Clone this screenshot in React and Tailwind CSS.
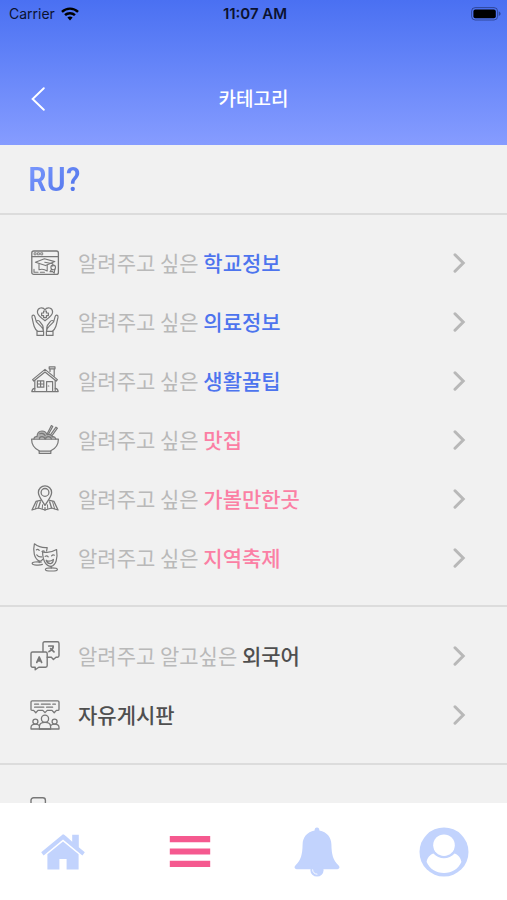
import React from 'react';

const line = {
  fill: 'none',
  stroke: 'currentColor',
  strokeLinecap: 'round',
  strokeLinejoin: 'round',
};

function SchoolIcon() {
  return (
    <svg viewBox="0 0 30 30" className="h-[30px] w-[30px]" {...line} strokeWidth="1.1">
      <rect x="1.8" y="3" width="26.6" height="23.4" rx="2" strokeWidth="1.3" />
      <path d="M1.8 8.6h26.6" />
      <path d="M4.5 4.8h1.6v2H4.5zM7.8 4.8h1.6v2H7.8zM11.1 4.8h1.6v2h-1.6z" strokeWidth="0.9" />
      <path d="M5.4 14.2l9-3.4 10.4 2.8-9.2 4z" />
      <path d="M9 16.4v5.4c2.6-1 5.8-.4 8.2 1.2v-5.6M14.8 14.2l8 1.6v2.4" />
      <circle cx="23.2" cy="19.4" r="2.3" />
      <path d="M21.6 21.2l-1.6 2.6 2.4-.4 1.8 1.8.6-3.8M4 21.4v2.8h4M10.4 24.2h4" />
    </svg>
  );
}

function CareIcon() {
  return (
    <svg viewBox="0 0 30 30" className="h-[30px] w-[30px]" {...line} strokeWidth="1.2">
      <path d="M15 13.8C11.4 11.2 7.4 8.4 7.4 5c0-4.6 5.6-5.4 7.6-2.2C17-.4 22.6.4 22.6 5c0 3.4-4 6.2-7.6 8.8z" />
      <path d="M13.6 4h2.8v2h2v2.6h-2v2h-2.8v-2h-2V6h2z" />
      <path d="M7.6 24.2C4.4 22 3.6 18.4 2 10.2c-.4-2.4 2.2-2.8 2.8-.8l1.6 5.4 4.8 4.8c1.8 1.6 2.2 3 2.2 4.6M6.4 14.8c.4-2 2.6-1.4 3.4-.2l2.8 3.8c.8 1.4.8 3.4.8 5.8" />
      <path d="M22.4 24.2c3.2-2.2 4-5.8 5.6-14 .4-2.4-2.2-2.8-2.8-.8l-1.6 5.4-4.8 4.8c-1.8 1.6-2.2 3-2.2 4.6M23.6 14.8c-.4-2-2.6-1.4-3.4-.2l-2.8 3.8c-.8 1.4-.8 3.4-.8 5.8" />
      <path d="M7 24.4h6.6v4H7zM16.4 24.4H23v4h-6.6z" />
    </svg>
  );
}

function HouseIcon() {
  return (
    <svg viewBox="0 0 30 30" className="h-[30px] w-[30px]" {...line} strokeWidth="1.2">
      <path d="M2.6 13.6L15 3.4l12.4 10.2-1.2 1.4L15 6 3.8 15z" />
      <path d="M4.8 14.4v10.2M25.2 14.4v10.2M20 5.4V2.8h4.2v7.4M19.2.8h5.8v2h-5.8z" />
      <path d="M7.4 14.8h6.4v6.4H7.4zM10.6 14.8v6.4M7.4 18h6.4M16.6 24.6v-9h6v9" />
      <path d="M18.2 20h.6" />
      <path d="M4.8 22.4c-2 .2-2.8 1.6-3 3.2h26.4c-.2-1.6-1-3-3-3.2" />
    </svg>
  );
}

function BowlIcon() {
  return (
    <svg viewBox="0 0 30 30" className="h-[30px] w-[30px]" {...line} strokeWidth="1.2">
      <path d="M1.6 14.2h26.8c0 6-3.4 9.6-7.6 11.6v2.6H9.2v-2.6C5 23.8 1.6 20.2 1.6 14.2z" />
      <path d="M9.2 26.2h11.6" />
      <path d="M4 14c0-1.6 1.4-2.8 3-2.4.2-3.6 2.2-5.6 5-5.6 2.4 0 4.2 1.2 5 3.6 2.6-.8 4.6.2 5.4 2.2 1.8-.4 3 .8 3.4 2.2" fill="#b0b0b0" />
      <path d="M9.4 14c0-3 4.8-3.4 5.6 0M15.6 14c.4-3 5-3.2 5.8 0M9.8 8.8c2.2-1.2 4.6 0 5.4 2" />
      <path d="M17.2 8.8L21.4.6l1.4.8L18.6 9M20.6 9.6l5.4-7.4 1.4 1-5.4 7.4" />
    </svg>
  );
}

function PinIcon() {
  return (
    <svg viewBox="0 0 30 30" className="h-[30px] w-[30px]" {...line} strokeWidth="1.3">
      <path d="M15 21.4c-2.6-4.8-6.6-8.8-6.6-13a6.6 6.6 0 0 1 13.2 0c0 4.2-4 8.2-6.6 13z" />
      <circle cx="15" cy="8.4" r="3.9" />
      <path d="M10.4 16.4L6 17.4 2 26l6.4-2 6.6 2 6.6-2 6.4 2-4-8.6-4.4-1" />
      <path d="M8.4 24l2-6.2M21.6 24l-2-6.2M15 26v-2.4" />
      <path d="M5.4 24.8l2-7M24.6 24.8l-2-7M12.2 24.8l.4-4M17.8 24.8l-.4-4" strokeWidth="1" />
    </svg>
  );
}

function MasksIcon() {
  return (
    <svg viewBox="0 0 30 30" className="h-[30px] w-[30px]" {...line} strokeWidth="1.2">
      <path d="M12.6 16.4c-1 1.6-2 2.2-3.4 1.6C4.4 15.8 2.6 8.4 4.4.8c3.6 2.8 8.4 4.2 12.8 3.8l-.6 3.4" />
      <path d="M6.4 6.8c1-.8 2-.6 2.8.6M12 8.6c.6-.8 1.6-.8 2.4-.4M6.8 11.8c1.2 1.6 3 2.4 4.8 2" />
      <path d="M9.2 18.2v1.4" />
      <path d="M12.4 21.4c-2.4 1.2-9.8 1-10.2-.8-.4-1.6 4.8-2.2 9-1.4" />
      <path d="M12.6 8.8c4.6 1.2 9.6.4 14-2.2 1.4 9.2-.8 15.6-5.4 16.8-4.8.2-8.6-5.4-8.6-14.6z" />
      <path d="M15.2 13.4c1-.8 2.2-.6 3 .4M21.6 12.8c.8-1 2-1.2 2.8-.6M16.2 17.2c2.2 1.4 5 1 7.2-.8-.2 2.6-1.2 4-2.8 4.2-2 .2-3.6-1-4.4-3.4z" />
      <path d="M21.2 23.4v1.8" />
      <ellipse cx="21.4" cy="26.4" rx="6" ry="1.6" />
    </svg>
  );
}

function TranslateIcon() {
  return (
    <svg viewBox="0 0 30 30" className="h-[30px] w-[30px]" {...line} strokeWidth="1.4">
      <path d="M13 10.6V2.4c0-1 .6-1.6 1.6-1.6h12.8c1 0 1.6.6 1.6 1.6v12.2c0 1-.6 1.6-1.6 1.6H26l-2.6 2.4-2-2.4h-4.2" />
      <path d="M17.2 18.6v6c0 1-.6 1.6-1.6 1.6H8.8l-3.6 2.6v-2.6H2.6c-1 0-1.6-.6-1.6-1.6V12.6c0-1 .6-1.6 1.6-1.6h13c1 0 1.6.6 1.6 1.6z" />
      <path d="M6.8 21.4L9.2 16l2.4 5.4M7.6 19.8h3.2M18.8 5h4.4c.2 2.4-1.8 4.4-4.2 5.6M20.6 7.6l3.4 3.2" strokeWidth="1.7" />
    </svg>
  );
}

function BoardIcon() {
  return (
    <svg viewBox="0 0 30 30" className="h-[30px] w-[30px]" {...line} strokeWidth="1.3">
      <path d="M2.2.8h25.6c.8 0 1.2.4 1.2 1.2v7.2c0 .8-.4 1.2-1.2 1.2h-1.4l-2.2 2.4-2.2-2.4h-4.8L15 12.6l-2.2-2.2H8l-2.2 2.4-2.2-2.4H2.2c-.8 0-1.2-.4-1.2-1.2V2C1 1.2 1.4.8 2.2.8z" />
      <path d="M4.6 4.2h4M11.4 4.2h8.8M22.8 4.2h2.6M4.6 7.2h9.2M16.6 7.2h6" />
      <circle cx="15" cy="18.8" r="3.6" />
      <path d="M9.4 29v-2.6c0-2.6 2-4 5.6-4s5.6 1.4 5.6 4V29z" />
      <circle cx="5.4" cy="21.6" r="2.5" />
      <circle cx="24.6" cy="21.6" r="2.5" />
      <path d="M9.4 25.6C8.4 24.6 7.2 24.2 5.4 24.2 2.6 24.2 1 25.4 1 27.4V29h28v-1.6c0-2-1.6-3.2-4.4-3.2-1.8 0-3 .4-4 1.4" />
    </svg>
  );
}

function PhoneIcon() {
  return (
    <svg viewBox="0 0 30 30" className="h-[30px] w-[30px]" {...line} strokeWidth="1.4">
      <rect x="1" y="0.7" width="14.4" height="28.4" rx="2.6" />
    </svg>
  );
}

function Chevron() {
  return (
    <svg viewBox="0 0 14 20" className="h-5 w-[14px] text-[#b8b8b8]" fill="none" stroke="currentColor" strokeWidth="3">
      <path d="M3 1.8L11.2 10 3 18.2" strokeLinecap="round" />
    </svg>
  );
}

const infoItems = [
  { icon: SchoolIcon, lead: '알려주고 싶은', name: '학교정보', color: 'text-[#4d74ee]' },
  { icon: CareIcon, lead: '알려주고 싶은', name: '의료정보', color: 'text-[#4d74ee]' },
  { icon: HouseIcon, lead: '알려주고 싶은', name: '생활꿀팁', color: 'text-[#4d74ee]' },
  { icon: BowlIcon, lead: '알려주고 싶은', name: '맛집', color: 'text-[#fb7fa4]' },
  { icon: PinIcon, lead: '알려주고 싶은', name: '가볼만한곳', color: 'text-[#fb7fa4]' },
  { icon: MasksIcon, lead: '알려주고 싶은', name: '지역축제', color: 'text-[#fb7fa4]' },
];

const boardItems = [
  { icon: TranslateIcon, lead: '알려주고 알고싶은', name: '외국어', color: 'text-[#4f4f4f]' },
  { icon: BoardIcon, name: '자유게시판', color: 'text-[#4f4f4f]' },
];

function CategoryRow({ item }) {
  const Icon = item.icon;
  return (
    <li>
      <a href="#" className="flex h-[59px] items-center pr-[41px] pl-[30px]">
        <span className="text-[#787878]">
          <Icon />
        </span>
        <span className="ml-[18px] flex-1 pb-[2px] text-[21px] leading-7 whitespace-nowrap text-[#b9b9b9]">
          {item.lead && `${item.lead} `}
          <span className={`font-medium ${item.color}`}>{item.name}</span>
        </span>
        <Chevron />
      </a>
    </li>
  );
}

function StatusBar() {
  return (
    <div className="grid h-7 grid-cols-3 items-center pr-[6px] pl-[9px] font-[Inter,sans-serif] text-[#0b1230]">
      <div className="flex items-center gap-[6px]">
        <span className="text-sm">Carrier</span>
        <svg viewBox="0 0 18 14" className="h-[14px] w-[18px]" fill="#000">
          <path d="M9 .4C5.600.4 2.500 1.700.1 3.900l1.700 1.800a10.400 10.400 0 0 1 14.400 0l1.700-1.800C15.500 1.700 12.400.4 9 .4z" />
          <path d="M9 5c-2.200 0-4.200.8-5.800 2.200l1.700 1.800a6 6 0 0 1 8.200 0l1.700-1.800A8.700 8.700 0 0 0 9 5z" />
          <path d="M9 9.400c-1 0-1.900.4-2.600 1L9 13.400l2.600-3c-.7-.6-1.600-1-2.600-1z" />
        </svg>
      </div>
      <span className="text-center text-[15px] font-semibold">11:07 AM</span>
      <svg viewBox="0 0 30 14" className="h-[14px] w-[30px] justify-self-end">
        <rect x="0.6" y="0.6" width="26" height="12.4" rx="3.6" fill="none" stroke="#0b1230" strokeOpacity="0.45" />
        <rect x="2.4" y="2.4" width="22.4" height="8.8" rx="2" fill="#000" />
        <path d="M27.8 4.6c1.2.4 1.8 1.2 1.8 2.2s-.6 1.8-1.8 2.2z" fill="#0b1230" fillOpacity="0.45" />
      </svg>
    </div>
  );
}

function TabBar() {
  return (
    <nav className="grid h-[97px] shrink-0 grid-cols-4 items-center justify-items-center bg-white text-[#c2d3fd]">
      <a href="#" aria-label="홈">
        <svg viewBox="0 0 44 36" className="h-9 w-11" fill="currentColor">
          <path d="M22 .2L.2 18.2l2.4 3.2L22 5.4l19.4 16 2.4-3.2-6-5V.8h-6.6v6.9L25.4 2.6C23.4.9 22.8.2 22 .2z" />
          <path d="M22 7.4L6.4 20.2V35.6h12V25h7.2v10.6h12V20.2z" />
        </svg>
      </a>
      <a href="#" aria-label="카테고리">
        <svg viewBox="0 0 42 32" className="h-8 w-[42px]" fill="#f5598f">
          <path d="M.8 0h40.4v6.2H.8zM.8 12.4h40.4v6.2H.8zM.8 24.8h40.4V31H.8z" />
        </svg>
      </a>
      <a href="#" aria-label="알림">
        <svg viewBox="0 0 46 50" className="h-[50px] w-[46px]" fill="currentColor">
          <path d="M23 .6c1.600 0 2.400 1.200 2.400 3C33 5 37.200 10.400 37.400 17.400c.2 10 1.600 15.600 7 20.800 1.800 1.800 1.200 4-1.200 4H2.800c-2.400 0-3-2.200-1.200-4 5.400-5.200 6.800-10.800 7-20.800C8.800 10.400 13 5 20.600 3.600c0-1.800.8-3 2.400-3z" />
          <circle cx="23" cy="43" r="6.6" />
          <path d="M18.6 42.8c.2 2.6 1.8 4.2 4.4 4.4" fill="none" stroke="#fff" strokeWidth="0.9" strokeLinecap="round" />
        </svg>
      </a>
      <a href="#" aria-label="내 정보">
        <svg viewBox="0 0 50 50" className="h-[50px] w-[50px]" fill="currentColor">
          <circle cx="25" cy="25" r="24.5" />
          <circle cx="25" cy="18.2" r="10.8" fill="#fff" />
          <path d="M14.4 26.4c5.6 6.4 15.6 6.4 21.2 0 3.6 1.4 6.4 4.6 6.8 8.6C39.6 41.6 33 46 25 46S10.4 41.6 7.6 35c.4-4 3.2-7.2 6.8-8.6z" fill="#fff" />
        </svg>
      </a>
    </nav>
  );
}

export default function App() {
  return (
    <div className="flex h-screen flex-col bg-[#f1f1f1] font-['Noto_Sans_CJK_KR',sans-serif]">
      <header className="shrink-0 bg-linear-to-b from-[#4a70f2] to-[#869cff]">
        <StatusBar />
        <div className="mt-6 grid h-[93px] grid-cols-3 items-center px-[30px] text-white">
          <button type="button" aria-label="뒤로" className="justify-self-start">
            <svg viewBox="0 0 16 24" className="h-6 w-4" fill="none" stroke="currentColor" strokeWidth="1.9" strokeLinecap="round">
              <path d="M13.8 1.2L2.6 12l11.2 10.8" />
            </svg>
          </button>
          <h1 className="pb-[2px] text-center text-[19px] leading-7 font-medium">카테고리</h1>
        </div>
      </header>

      <main className="min-h-0 flex-1 overflow-y-auto [scrollbar-width:none]">
        <div className="flex h-[70px] items-center border-b-2 border-[#dcdcdc] pl-7">
          <span className="bg-linear-to-br from-[#7f9cff] to-[#4a6ee8] bg-clip-text font-['Roboto_Condensed','Open_Sans_Condensed','Noto_Sans_CJK_KR',sans-serif] text-[34px] leading-10 font-medium text-transparent">
            RU?
          </span>
        </div>
        <ul className="border-b-2 border-[#dcdcdc] py-[18px]">
          {infoItems.map((item) => (
            <CategoryRow key={item.name} item={item} />
          ))}
        </ul>
        <ul className="border-b-2 border-[#dcdcdc] py-[19px]">
          {boardItems.map((item) => (
            <CategoryRow key={item.name} item={item} />
          ))}
        </ul>
        <div className="px-[30px] pt-8 text-[#787878]">
          <PhoneIcon />
        </div>
      </main>

      <TabBar />
    </div>
  );
}
